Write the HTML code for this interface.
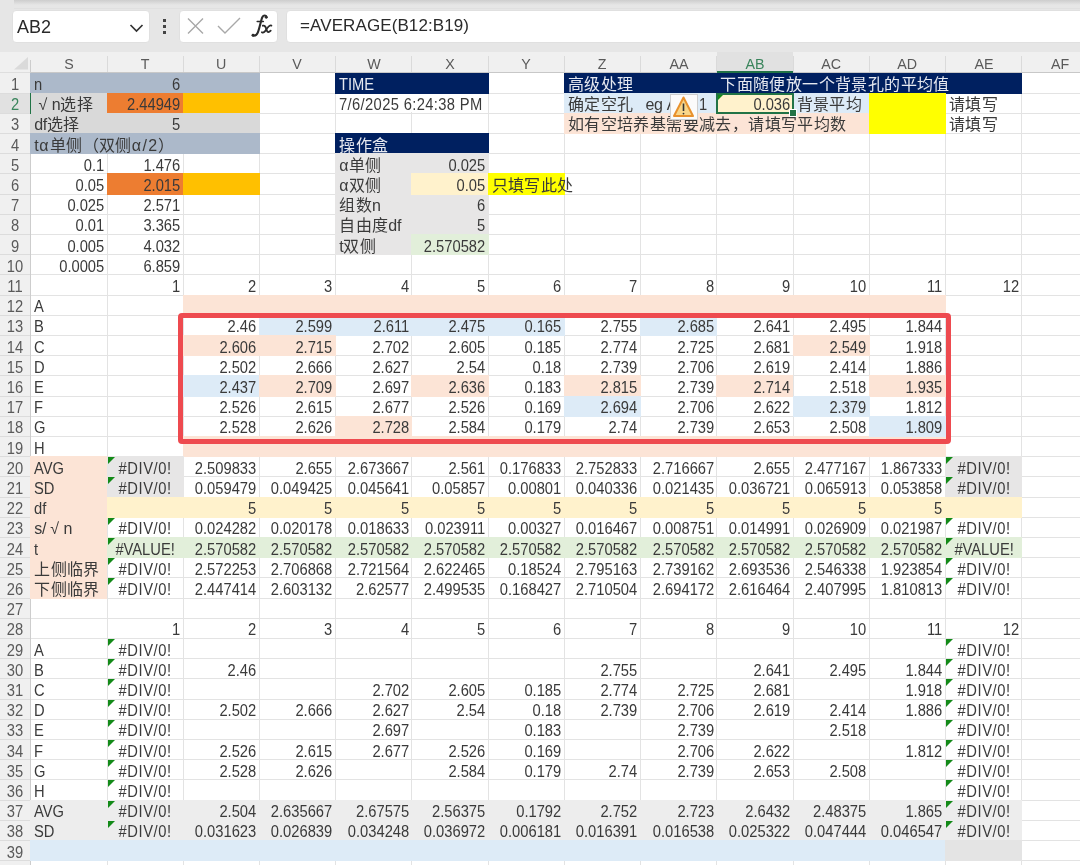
<!DOCTYPE html><html lang="zh-CN"><head><meta charset="utf-8"><style>
*{margin:0;padding:0;box-sizing:border-box}
html,body{width:1080px;height:865px;overflow:hidden;background:#fff;font-family:"Liberation Sans",sans-serif;color:#3a3a3a}
body{filter:blur(0.5px)}
.a{position:absolute}
.f{position:absolute}
.t{position:absolute;white-space:nowrap;height:20px;line-height:20px;font-size:16px}
.n{transform:scaleX(0.92)}
.L{transform-origin:left center}.R{transform-origin:right center}.C{transform-origin:center center}
.cj{font-size:16px;letter-spacing:0.4px;line-height:0}
.lt{letter-spacing:-0.3px;line-height:0}
.gh{position:absolute;height:1px;background:#e3e3e3}
.gv{position:absolute;width:1px;background:#e3e3e3}
.rh{position:absolute;left:0;width:30px;text-align:center;font-size:16px;color:#505050;line-height:20px;height:20px;transform:scaleX(0.92)}
.ch{position:absolute;top:53.5px;text-align:center;font-size:15.5px;color:#505050;line-height:20px;height:20px;transform:scaleX(0.92)}
</style></head><body>

<div class="a" style="left:0;top:0;width:1080px;height:52px;background:#e6e6e6"></div>
<div class="a" style="left:14px;top:0;width:1066px;height:5px;background:linear-gradient(#cdcdcd,#e6e6e6)"></div>
<div class="a" style="left:14px;top:8px;width:1066px;height:1px;background:#e0e0e0"></div>
<div class="a" style="left:12px;top:9.5px;width:138px;height:33px;background:#fff;border-radius:4px;border:1px solid #e0e0e0"></div>
<div class="a" style="left:17px;top:14px;font-size:18px;line-height:26px;color:#2a2a2a">AB2</div>
<svg class="a" style="left:128px;top:21px" width="18" height="14"><path d="M2.5 4 L8.5 10 L14.5 4" fill="none" stroke="#333" stroke-width="1.7"/></svg>
<div class="a" style="left:163px;top:18.5px;width:3px;height:3px;background:#444"></div>
<div class="a" style="left:163px;top:24.5px;width:3px;height:3px;background:#444"></div>
<div class="a" style="left:163px;top:30.5px;width:3px;height:3px;background:#444"></div>
<div class="a" style="left:179px;top:9.5px;width:99px;height:33px;background:#fff;border-radius:4px;border:1px solid #e0e0e0"></div>
<svg class="a" style="left:185px;top:16px" width="22" height="22"><path d="M3 2.5 L18 17.5 M18 2.5 L3 17.5" stroke="#a8a8a8" stroke-width="1.4" fill="none"/></svg>
<svg class="a" style="left:215px;top:16px" width="28" height="22"><path d="M3 10 L10 17 L25 2" stroke="#a8a8a8" stroke-width="1.4" fill="none"/></svg>
<svg class="a" style="left:0;top:0" width="300" height="45"><g fill="none" stroke="#2b2b2b" stroke-linecap="round"><path d="M266.6 17.2 C266.4 15.2 263.6 14.8 262.3 17.3 C261.3 19.3 259.2 29.5 257.9 32.3 C256.9 34.6 255 36.2 252.8 35.4" stroke-width="2.1"/><path d="M257.2 21.6 L263.4 21.6" stroke-width="1.5"/><path d="M262.8 25.7 C264.8 25 265.7 27 266.4 29.4 C267.1 31.9 268.3 33.2 270.7 30.6" stroke-width="1.8"/><path d="M271.4 25.6 C269.9 24.9 268.5 26.4 266.6 29 C264.8 31.6 263.6 33.4 261.9 32.2" stroke-width="1.8"/></g><circle cx="266.2" cy="17.3" r="1.4" fill="#2b2b2b"/><circle cx="253" cy="35.2" r="1.4" fill="#2b2b2b"/></svg>
<div class="a" style="left:286px;top:9.5px;width:800px;height:33px;background:#fff;border-radius:4px;border:1px solid #e0e0e0"></div>
<div class="a" style="left:300px;top:13px;font-size:17px;letter-spacing:0.1px;line-height:26px;color:#2a2a2a">=AVERAGE(B12:B19)</div>
<div class="a" style="left:0;top:52px;width:1080px;height:21px;background:#f0f0f0"></div>
<div class="a" style="left:30px;top:72px;width:1050px;height:1px;background:#c8c8c8"></div>
<div class="a" style="left:0;top:72px;width:30px;height:1px;background:#dedede"></div>
<div class="a" style="left:0;top:73px;width:30px;height:800px;background:#f0f0f0"></div>
<div class="a" style="left:30px;top:60px;width:1px;height:812px;background:#cdcdcd"></div>
<svg class="a" style="left:10px;top:55px" width="20" height="17"><path d="M18 2 L18 14.6 L4 14.6 Z" fill="#dadada"/></svg>
<div class="a" style="left:716.8px;top:52px;width:76.2px;height:20px;background:#e1e1e1"></div>
<div class="a" style="left:716.8px;top:70.5px;width:76.2px;height:2px;background:#217346"></div>
<div class="ch" style="left:30.7px;width:76.2px;color:#5a5a5a">S</div>
<div class="ch" style="left:107.0px;width:76.2px;color:#5a5a5a">T</div>
<div class="a" style="left:106.5px;top:56px;width:1px;height:16px;background:#dadada"></div>
<div class="ch" style="left:183.2px;width:76.2px;color:#5a5a5a">U</div>
<div class="a" style="left:182.7px;top:56px;width:1px;height:16px;background:#dadada"></div>
<div class="ch" style="left:259.4px;width:76.2px;color:#5a5a5a">V</div>
<div class="a" style="left:258.9px;top:56px;width:1px;height:16px;background:#dadada"></div>
<div class="ch" style="left:335.7px;width:76.2px;color:#5a5a5a">W</div>
<div class="a" style="left:335.2px;top:56px;width:1px;height:16px;background:#dadada"></div>
<div class="ch" style="left:411.9px;width:76.2px;color:#5a5a5a">X</div>
<div class="a" style="left:411.4px;top:56px;width:1px;height:16px;background:#dadada"></div>
<div class="ch" style="left:488.1px;width:76.2px;color:#5a5a5a">Y</div>
<div class="a" style="left:487.6px;top:56px;width:1px;height:16px;background:#dadada"></div>
<div class="ch" style="left:564.4px;width:76.2px;color:#5a5a5a">Z</div>
<div class="a" style="left:563.9px;top:56px;width:1px;height:16px;background:#dadada"></div>
<div class="ch" style="left:640.6px;width:76.2px;color:#5a5a5a">AA</div>
<div class="a" style="left:640.1px;top:56px;width:1px;height:16px;background:#dadada"></div>
<div class="ch" style="left:716.8px;width:76.2px;color:#3a855c">AB</div>
<div class="a" style="left:716.3px;top:56px;width:1px;height:16px;background:#dadada"></div>
<div class="ch" style="left:793.0px;width:76.2px;color:#5a5a5a">AC</div>
<div class="a" style="left:792.5px;top:56px;width:1px;height:16px;background:#dadada"></div>
<div class="ch" style="left:869.3px;width:76.2px;color:#5a5a5a">AD</div>
<div class="a" style="left:868.8px;top:56px;width:1px;height:16px;background:#dadada"></div>
<div class="ch" style="left:945.5px;width:76.2px;color:#5a5a5a">AE</div>
<div class="a" style="left:945.0px;top:56px;width:1px;height:16px;background:#dadada"></div>
<div class="ch" style="left:1021.7px;width:76.2px;color:#5a5a5a">AF</div>
<div class="a" style="left:1021.2px;top:56px;width:1px;height:16px;background:#dadada"></div>
<div class="a" style="left:0;top:93.1px;width:30px;height:20.2px;background:#e1e1e1"></div>
<div class="rh" style="top:75.06px;color:#5a5a5a">1</div>
<div class="a" style="left:0;top:92.6px;width:30px;height:1px;background:#dcdcdc"></div>
<div class="rh" style="top:95.26px;color:#3a855c">2</div>
<div class="a" style="left:0;top:112.8px;width:30px;height:1px;background:#dcdcdc"></div>
<div class="rh" style="top:115.46px;color:#5a5a5a">3</div>
<div class="a" style="left:0;top:133.0px;width:30px;height:1px;background:#dcdcdc"></div>
<div class="rh" style="top:135.66px;color:#5a5a5a">4</div>
<div class="a" style="left:0;top:153.2px;width:30px;height:1px;background:#dcdcdc"></div>
<div class="rh" style="top:155.86px;color:#5a5a5a">5</div>
<div class="a" style="left:0;top:173.4px;width:30px;height:1px;background:#dcdcdc"></div>
<div class="rh" style="top:176.06px;color:#5a5a5a">6</div>
<div class="a" style="left:0;top:193.6px;width:30px;height:1px;background:#dcdcdc"></div>
<div class="rh" style="top:196.26px;color:#5a5a5a">7</div>
<div class="a" style="left:0;top:213.8px;width:30px;height:1px;background:#dcdcdc"></div>
<div class="rh" style="top:216.46px;color:#5a5a5a">8</div>
<div class="a" style="left:0;top:234.0px;width:30px;height:1px;background:#dcdcdc"></div>
<div class="rh" style="top:236.66px;color:#5a5a5a">9</div>
<div class="a" style="left:0;top:254.2px;width:30px;height:1px;background:#dcdcdc"></div>
<div class="rh" style="top:256.86px;color:#5a5a5a">10</div>
<div class="a" style="left:0;top:274.4px;width:30px;height:1px;background:#dcdcdc"></div>
<div class="rh" style="top:277.06px;color:#5a5a5a">11</div>
<div class="a" style="left:0;top:294.6px;width:30px;height:1px;background:#dcdcdc"></div>
<div class="rh" style="top:297.26px;color:#5a5a5a">12</div>
<div class="a" style="left:0;top:314.8px;width:30px;height:1px;background:#dcdcdc"></div>
<div class="rh" style="top:317.46px;color:#5a5a5a">13</div>
<div class="a" style="left:0;top:335.0px;width:30px;height:1px;background:#dcdcdc"></div>
<div class="rh" style="top:337.66px;color:#5a5a5a">14</div>
<div class="a" style="left:0;top:355.2px;width:30px;height:1px;background:#dcdcdc"></div>
<div class="rh" style="top:357.86px;color:#5a5a5a">15</div>
<div class="a" style="left:0;top:375.4px;width:30px;height:1px;background:#dcdcdc"></div>
<div class="rh" style="top:378.06px;color:#5a5a5a">16</div>
<div class="a" style="left:0;top:395.6px;width:30px;height:1px;background:#dcdcdc"></div>
<div class="rh" style="top:398.26px;color:#5a5a5a">17</div>
<div class="a" style="left:0;top:415.8px;width:30px;height:1px;background:#dcdcdc"></div>
<div class="rh" style="top:418.46px;color:#5a5a5a">18</div>
<div class="a" style="left:0;top:436.0px;width:30px;height:1px;background:#dcdcdc"></div>
<div class="rh" style="top:438.66px;color:#5a5a5a">19</div>
<div class="a" style="left:0;top:456.2px;width:30px;height:1px;background:#dcdcdc"></div>
<div class="rh" style="top:458.86px;color:#5a5a5a">20</div>
<div class="a" style="left:0;top:476.4px;width:30px;height:1px;background:#dcdcdc"></div>
<div class="rh" style="top:479.06px;color:#5a5a5a">21</div>
<div class="a" style="left:0;top:496.6px;width:30px;height:1px;background:#dcdcdc"></div>
<div class="rh" style="top:499.26px;color:#5a5a5a">22</div>
<div class="a" style="left:0;top:516.8px;width:30px;height:1px;background:#dcdcdc"></div>
<div class="rh" style="top:519.46px;color:#5a5a5a">23</div>
<div class="a" style="left:0;top:537.0px;width:30px;height:1px;background:#dcdcdc"></div>
<div class="rh" style="top:539.66px;color:#5a5a5a">24</div>
<div class="a" style="left:0;top:557.2px;width:30px;height:1px;background:#dcdcdc"></div>
<div class="rh" style="top:559.86px;color:#5a5a5a">25</div>
<div class="a" style="left:0;top:577.4px;width:30px;height:1px;background:#dcdcdc"></div>
<div class="rh" style="top:580.06px;color:#5a5a5a">26</div>
<div class="a" style="left:0;top:597.6px;width:30px;height:1px;background:#dcdcdc"></div>
<div class="rh" style="top:600.26px;color:#5a5a5a">27</div>
<div class="a" style="left:0;top:617.8px;width:30px;height:1px;background:#dcdcdc"></div>
<div class="rh" style="top:620.46px;color:#5a5a5a">28</div>
<div class="a" style="left:0;top:638.0px;width:30px;height:1px;background:#dcdcdc"></div>
<div class="rh" style="top:640.66px;color:#5a5a5a">29</div>
<div class="a" style="left:0;top:658.2px;width:30px;height:1px;background:#dcdcdc"></div>
<div class="rh" style="top:660.86px;color:#5a5a5a">30</div>
<div class="a" style="left:0;top:678.4px;width:30px;height:1px;background:#dcdcdc"></div>
<div class="rh" style="top:681.06px;color:#5a5a5a">31</div>
<div class="a" style="left:0;top:698.6px;width:30px;height:1px;background:#dcdcdc"></div>
<div class="rh" style="top:701.26px;color:#5a5a5a">32</div>
<div class="a" style="left:0;top:718.8px;width:30px;height:1px;background:#dcdcdc"></div>
<div class="rh" style="top:721.46px;color:#5a5a5a">33</div>
<div class="a" style="left:0;top:739.0px;width:30px;height:1px;background:#dcdcdc"></div>
<div class="rh" style="top:741.66px;color:#5a5a5a">34</div>
<div class="a" style="left:0;top:759.2px;width:30px;height:1px;background:#dcdcdc"></div>
<div class="rh" style="top:761.86px;color:#5a5a5a">35</div>
<div class="a" style="left:0;top:779.4px;width:30px;height:1px;background:#dcdcdc"></div>
<div class="rh" style="top:782.06px;color:#5a5a5a">36</div>
<div class="a" style="left:0;top:799.6px;width:30px;height:1px;background:#dcdcdc"></div>
<div class="rh" style="top:802.26px;color:#5a5a5a">37</div>
<div class="a" style="left:0;top:819.8px;width:30px;height:1px;background:#dcdcdc"></div>
<div class="rh" style="top:822.46px;color:#5a5a5a">38</div>
<div class="a" style="left:0;top:840.0px;width:30px;height:1px;background:#dcdcdc"></div>
<div class="rh" style="top:842.66px;color:#5a5a5a">39</div>
<div class="a" style="left:0;top:860.2px;width:30px;height:1px;background:#dcdcdc"></div>
<div class="rh" style="top:862.86px;color:#5a5a5a">40</div>
<div class="a" style="left:0;top:880.4px;width:30px;height:1px;background:#dcdcdc"></div>
<div class="gh" style="left:31px;top:92.6px;width:1049px"></div>
<div class="gh" style="left:31px;top:112.8px;width:1049px"></div>
<div class="gh" style="left:31px;top:133.0px;width:1049px"></div>
<div class="gh" style="left:31px;top:153.2px;width:1049px"></div>
<div class="gh" style="left:31px;top:173.4px;width:1049px"></div>
<div class="gh" style="left:31px;top:193.6px;width:1049px"></div>
<div class="gh" style="left:31px;top:213.8px;width:1049px"></div>
<div class="gh" style="left:31px;top:234.0px;width:1049px"></div>
<div class="gh" style="left:31px;top:254.2px;width:1049px"></div>
<div class="gh" style="left:31px;top:274.4px;width:1049px"></div>
<div class="gh" style="left:31px;top:294.6px;width:1049px"></div>
<div class="gh" style="left:31px;top:314.8px;width:1049px"></div>
<div class="gh" style="left:31px;top:335.0px;width:1049px"></div>
<div class="gh" style="left:31px;top:355.2px;width:1049px"></div>
<div class="gh" style="left:31px;top:375.4px;width:1049px"></div>
<div class="gh" style="left:31px;top:395.6px;width:1049px"></div>
<div class="gh" style="left:31px;top:415.8px;width:1049px"></div>
<div class="gh" style="left:31px;top:436.0px;width:1049px"></div>
<div class="gh" style="left:31px;top:456.2px;width:1049px"></div>
<div class="gh" style="left:31px;top:476.4px;width:1049px"></div>
<div class="gh" style="left:31px;top:496.6px;width:1049px"></div>
<div class="gh" style="left:31px;top:516.8px;width:1049px"></div>
<div class="gh" style="left:31px;top:537.0px;width:1049px"></div>
<div class="gh" style="left:31px;top:557.2px;width:1049px"></div>
<div class="gh" style="left:31px;top:577.4px;width:1049px"></div>
<div class="gh" style="left:31px;top:597.6px;width:1049px"></div>
<div class="gh" style="left:31px;top:617.8px;width:1049px"></div>
<div class="gh" style="left:31px;top:638.0px;width:1049px"></div>
<div class="gh" style="left:31px;top:658.2px;width:1049px"></div>
<div class="gh" style="left:31px;top:678.4px;width:1049px"></div>
<div class="gh" style="left:31px;top:698.6px;width:1049px"></div>
<div class="gh" style="left:31px;top:718.8px;width:1049px"></div>
<div class="gh" style="left:31px;top:739.0px;width:1049px"></div>
<div class="gh" style="left:31px;top:759.2px;width:1049px"></div>
<div class="gh" style="left:31px;top:779.4px;width:1049px"></div>
<div class="gh" style="left:31px;top:799.6px;width:1049px"></div>
<div class="gh" style="left:31px;top:819.8px;width:1049px"></div>
<div class="gh" style="left:31px;top:840.0px;width:1049px"></div>
<div class="gh" style="left:31px;top:860.2px;width:1049px"></div>
<div class="gh" style="left:31px;top:880.4px;width:1049px"></div>
<div class="gv" style="left:106.5px;top:73px;height:800px"></div>
<div class="gv" style="left:182.7px;top:73px;height:800px"></div>
<div class="gv" style="left:258.9px;top:73px;height:800px"></div>
<div class="gv" style="left:335.2px;top:73px;height:800px"></div>
<div class="gv" style="left:411.4px;top:73px;height:800px"></div>
<div class="gv" style="left:487.6px;top:73px;height:800px"></div>
<div class="gv" style="left:563.9px;top:73px;height:800px"></div>
<div class="gv" style="left:640.1px;top:73px;height:800px"></div>
<div class="gv" style="left:716.3px;top:73px;height:800px"></div>
<div class="gv" style="left:792.5px;top:73px;height:800px"></div>
<div class="gv" style="left:868.8px;top:73px;height:800px"></div>
<div class="gv" style="left:945.0px;top:73px;height:800px"></div>
<div class="gv" style="left:1021.2px;top:73px;height:800px"></div>
<div class="gv" style="left:1097.5px;top:73px;height:800px"></div>
<div class="a" style="left:410.9px;top:94.1px;width:3px;height:18.2px;background:#fff"></div>
<div class="a" style="left:563.4px;top:174.9px;width:3px;height:18.2px;background:#fff"></div>
<div class="f" style="left:30.2px;top:73.0px;width:229.7px;height:20.6px;background:#acb9ca"></div>
<div class="f" style="left:335.2px;top:73.0px;width:153.5px;height:20.6px;background:#002060"></div>
<div class="f" style="left:563.9px;top:73.0px;width:458.4px;height:20.6px;background:#002060"></div>
<div class="f" style="left:30.2px;top:92.6px;width:77.2px;height:21.2px;background:#d9d9d9"></div>
<div class="f" style="left:106.5px;top:92.6px;width:77.2px;height:21.2px;background:#ed7d31"></div>
<div class="f" style="left:182.7px;top:92.6px;width:77.2px;height:21.2px;background:#ffc000"></div>
<div class="f" style="left:563.9px;top:92.6px;width:153.5px;height:21.2px;background:#ddebf7"></div>
<div class="f" style="left:716.3px;top:92.6px;width:77.2px;height:21.2px;background:#fff2cc"></div>
<div class="f" style="left:792.5px;top:92.6px;width:77.2px;height:21.2px;background:#ddebf7"></div>
<div class="f" style="left:868.8px;top:92.6px;width:77.2px;height:21.2px;background:#ffff00"></div>
<div class="f" style="left:30.2px;top:112.8px;width:229.7px;height:21.2px;background:#d9d9d9"></div>
<div class="f" style="left:563.9px;top:112.8px;width:305.9px;height:21.2px;background:#fce4d6"></div>
<div class="f" style="left:868.8px;top:112.8px;width:77.2px;height:21.2px;background:#ffff00"></div>
<div class="f" style="left:30.2px;top:133.0px;width:229.7px;height:21.2px;background:#acb9ca"></div>
<div class="f" style="left:335.2px;top:133.0px;width:153.5px;height:21.2px;background:#002060"></div>
<div class="f" style="left:335.2px;top:153.2px;width:153.5px;height:21.2px;background:#e7e6e6"></div>
<div class="f" style="left:335.2px;top:193.6px;width:153.5px;height:21.2px;background:#e7e6e6"></div>
<div class="f" style="left:335.2px;top:213.8px;width:153.5px;height:21.2px;background:#e7e6e6"></div>
<div class="f" style="left:106.5px;top:173.4px;width:77.2px;height:21.2px;background:#ed7d31"></div>
<div class="f" style="left:182.7px;top:173.4px;width:77.2px;height:21.2px;background:#ffc000"></div>
<div class="f" style="left:335.2px;top:173.4px;width:77.2px;height:21.2px;background:#e7e6e6"></div>
<div class="f" style="left:411.4px;top:173.4px;width:77.2px;height:21.2px;background:#fff2cc"></div>
<div class="f" style="left:487.6px;top:173.4px;width:77.2px;height:21.2px;background:#ffff00"></div>
<div class="f" style="left:335.2px;top:234.0px;width:77.2px;height:21.2px;background:#e7e6e6"></div>
<div class="f" style="left:411.4px;top:234.0px;width:77.2px;height:21.2px;background:#e2efda"></div>
<div class="f" style="left:182.7px;top:294.6px;width:763.3px;height:21.2px;background:#fce4d6"></div>
<div class="f" style="left:182.7px;top:436.0px;width:763.3px;height:21.2px;background:#fce4d6"></div>
<div class="f" style="left:258.9px;top:314.8px;width:77.2px;height:21.2px;background:#ddebf7"></div>
<div class="f" style="left:335.2px;top:314.8px;width:77.2px;height:21.2px;background:#ddebf7"></div>
<div class="f" style="left:411.4px;top:314.8px;width:77.2px;height:21.2px;background:#ddebf7"></div>
<div class="f" style="left:487.6px;top:314.8px;width:77.2px;height:21.2px;background:#ddebf7"></div>
<div class="f" style="left:640.1px;top:314.8px;width:77.2px;height:21.2px;background:#ddebf7"></div>
<div class="f" style="left:182.7px;top:335.0px;width:77.2px;height:21.2px;background:#fce4d6"></div>
<div class="f" style="left:258.9px;top:335.0px;width:77.2px;height:21.2px;background:#fce4d6"></div>
<div class="f" style="left:792.5px;top:335.0px;width:77.2px;height:21.2px;background:#fce4d6"></div>
<div class="f" style="left:182.7px;top:375.4px;width:77.2px;height:21.2px;background:#ddebf7"></div>
<div class="f" style="left:258.9px;top:375.4px;width:77.2px;height:21.2px;background:#fce4d6"></div>
<div class="f" style="left:411.4px;top:375.4px;width:77.2px;height:21.2px;background:#fce4d6"></div>
<div class="f" style="left:563.9px;top:375.4px;width:77.2px;height:21.2px;background:#fce4d6"></div>
<div class="f" style="left:716.3px;top:375.4px;width:77.2px;height:21.2px;background:#fce4d6"></div>
<div class="f" style="left:868.8px;top:375.4px;width:77.2px;height:21.2px;background:#fce4d6"></div>
<div class="f" style="left:563.9px;top:395.6px;width:77.2px;height:21.2px;background:#ddebf7"></div>
<div class="f" style="left:792.5px;top:395.6px;width:77.2px;height:21.2px;background:#ddebf7"></div>
<div class="f" style="left:335.2px;top:415.8px;width:77.2px;height:21.2px;background:#fce4d6"></div>
<div class="f" style="left:868.8px;top:415.8px;width:77.2px;height:21.2px;background:#ddebf7"></div>
<div class="f" style="left:30.2px;top:456.2px;width:77.2px;height:21.2px;background:#fce4d6"></div>
<div class="f" style="left:30.2px;top:476.4px;width:77.2px;height:21.2px;background:#fce4d6"></div>
<div class="f" style="left:30.2px;top:496.6px;width:77.2px;height:21.2px;background:#fce4d6"></div>
<div class="f" style="left:30.2px;top:516.8px;width:77.2px;height:21.2px;background:#fce4d6"></div>
<div class="f" style="left:30.2px;top:537.0px;width:77.2px;height:21.2px;background:#fce4d6"></div>
<div class="f" style="left:30.2px;top:557.2px;width:77.2px;height:21.2px;background:#fce4d6"></div>
<div class="f" style="left:30.2px;top:577.4px;width:77.2px;height:21.2px;background:#fce4d6"></div>
<div class="f" style="left:106.5px;top:456.2px;width:77.2px;height:21.2px;background:#e7e6e6"></div>
<div class="f" style="left:106.5px;top:476.4px;width:77.2px;height:21.2px;background:#e7e6e6"></div>
<div class="f" style="left:945.0px;top:456.2px;width:77.2px;height:21.2px;background:#e7e6e6"></div>
<div class="f" style="left:945.0px;top:476.4px;width:77.2px;height:21.2px;background:#e7e6e6"></div>
<div class="f" style="left:106.5px;top:496.6px;width:915.8px;height:21.2px;background:#fff2cc"></div>
<div class="f" style="left:106.5px;top:537.0px;width:915.8px;height:21.2px;background:#e2efda"></div>
<div class="f" style="left:30.2px;top:799.6px;width:992.0px;height:21.2px;background:#ededed"></div>
<div class="f" style="left:30.2px;top:819.8px;width:992.0px;height:21.2px;background:#ededed"></div>
<div class="f" style="left:30.2px;top:840.0px;width:915.8px;height:21.2px;background:#ddebf7"></div>
<div class="f" style="left:945.0px;top:840.0px;width:77.2px;height:21.2px;background:#e4e4e4"></div>
<svg class="a" style="left:107.5px;top:457.2px" width="9" height="9"><path d="M0 0 L7 0 L0 7Z" fill="#138a18"/></svg>
<svg class="a" style="left:946.0px;top:457.2px" width="9" height="9"><path d="M0 0 L7 0 L0 7Z" fill="#138a18"/></svg>
<svg class="a" style="left:107.5px;top:477.4px" width="9" height="9"><path d="M0 0 L7 0 L0 7Z" fill="#138a18"/></svg>
<svg class="a" style="left:946.0px;top:477.4px" width="9" height="9"><path d="M0 0 L7 0 L0 7Z" fill="#138a18"/></svg>
<svg class="a" style="left:107.5px;top:517.8px" width="9" height="9"><path d="M0 0 L7 0 L0 7Z" fill="#138a18"/></svg>
<svg class="a" style="left:946.0px;top:517.8px" width="9" height="9"><path d="M0 0 L7 0 L0 7Z" fill="#138a18"/></svg>
<svg class="a" style="left:107.5px;top:538.0px" width="9" height="9"><path d="M0 0 L7 0 L0 7Z" fill="#138a18"/></svg>
<svg class="a" style="left:946.0px;top:538.0px" width="9" height="9"><path d="M0 0 L7 0 L0 7Z" fill="#138a18"/></svg>
<svg class="a" style="left:107.5px;top:558.2px" width="9" height="9"><path d="M0 0 L7 0 L0 7Z" fill="#138a18"/></svg>
<svg class="a" style="left:946.0px;top:558.2px" width="9" height="9"><path d="M0 0 L7 0 L0 7Z" fill="#138a18"/></svg>
<svg class="a" style="left:107.5px;top:578.4px" width="9" height="9"><path d="M0 0 L7 0 L0 7Z" fill="#138a18"/></svg>
<svg class="a" style="left:946.0px;top:578.4px" width="9" height="9"><path d="M0 0 L7 0 L0 7Z" fill="#138a18"/></svg>
<svg class="a" style="left:107.5px;top:639.0px" width="9" height="9"><path d="M0 0 L7 0 L0 7Z" fill="#138a18"/></svg>
<svg class="a" style="left:946.0px;top:639.0px" width="9" height="9"><path d="M0 0 L7 0 L0 7Z" fill="#138a18"/></svg>
<svg class="a" style="left:107.5px;top:659.2px" width="9" height="9"><path d="M0 0 L7 0 L0 7Z" fill="#138a18"/></svg>
<svg class="a" style="left:946.0px;top:659.2px" width="9" height="9"><path d="M0 0 L7 0 L0 7Z" fill="#138a18"/></svg>
<svg class="a" style="left:107.5px;top:679.4px" width="9" height="9"><path d="M0 0 L7 0 L0 7Z" fill="#138a18"/></svg>
<svg class="a" style="left:946.0px;top:679.4px" width="9" height="9"><path d="M0 0 L7 0 L0 7Z" fill="#138a18"/></svg>
<svg class="a" style="left:107.5px;top:699.6px" width="9" height="9"><path d="M0 0 L7 0 L0 7Z" fill="#138a18"/></svg>
<svg class="a" style="left:946.0px;top:699.6px" width="9" height="9"><path d="M0 0 L7 0 L0 7Z" fill="#138a18"/></svg>
<svg class="a" style="left:107.5px;top:719.8px" width="9" height="9"><path d="M0 0 L7 0 L0 7Z" fill="#138a18"/></svg>
<svg class="a" style="left:946.0px;top:719.8px" width="9" height="9"><path d="M0 0 L7 0 L0 7Z" fill="#138a18"/></svg>
<svg class="a" style="left:107.5px;top:740.0px" width="9" height="9"><path d="M0 0 L7 0 L0 7Z" fill="#138a18"/></svg>
<svg class="a" style="left:946.0px;top:740.0px" width="9" height="9"><path d="M0 0 L7 0 L0 7Z" fill="#138a18"/></svg>
<svg class="a" style="left:107.5px;top:760.2px" width="9" height="9"><path d="M0 0 L7 0 L0 7Z" fill="#138a18"/></svg>
<svg class="a" style="left:946.0px;top:760.2px" width="9" height="9"><path d="M0 0 L7 0 L0 7Z" fill="#138a18"/></svg>
<svg class="a" style="left:107.5px;top:780.4px" width="9" height="9"><path d="M0 0 L7 0 L0 7Z" fill="#138a18"/></svg>
<svg class="a" style="left:946.0px;top:780.4px" width="9" height="9"><path d="M0 0 L7 0 L0 7Z" fill="#138a18"/></svg>
<svg class="a" style="left:107.5px;top:800.6px" width="9" height="9"><path d="M0 0 L7 0 L0 7Z" fill="#138a18"/></svg>
<svg class="a" style="left:946.0px;top:800.6px" width="9" height="9"><path d="M0 0 L7 0 L0 7Z" fill="#138a18"/></svg>
<svg class="a" style="left:107.5px;top:820.8px" width="9" height="9"><path d="M0 0 L7 0 L0 7Z" fill="#138a18"/></svg>
<svg class="a" style="left:946.0px;top:820.8px" width="9" height="9"><path d="M0 0 L7 0 L0 7Z" fill="#138a18"/></svg>
<svg class="a" style="left:717.3px;top:93.6px" width="9" height="9"><path d="M0 0 L7 0 L0 7Z" fill="#138a18"/></svg>
<div class="t n L" style="top:75.06px;left:34.24px;">n</div>
<div class="t n R" style="top:75.06px;left:106.97px;width:73.23px;text-align:right;">6</div>
<div class="t n L" style="top:75.06px;left:339.16px;color:#e6e9f0;">TIME</div>
<div class="t" style="top:75.06px;left:567.85px;color:#e6e9f0;"><span class="cj">高级处理</span></div>
<div class="t" style="top:75.06px;left:720.31px;color:#e6e9f0;"><span class="cj">下面随便放一个背景孔的平均值</span></div>
<div class="t" style="top:95.26px;left:34.24px;"><span class="lt">&nbsp;</span><span class="cj">√</span><span class="lt">&nbsp;n</span><span class="cj">选择</span></div>
<div class="t n R" style="top:95.26px;left:106.97px;width:73.23px;text-align:right;">2.44949</div>
<div class="t n L" style="top:95.26px;left:339.16px;letter-spacing:0.4px">7/6/2025 6:24:38 PM</div>
<div class="t" style="top:95.26px;left:567.85px;"><span class="cj">确定空孔</span><span class="lt" style="margin-left:12px">eg&nbsp;A</span></div>
<div class="t n R" style="top:95.26px;left:716.81px;width:73.23px;text-align:right;">0.036</div>
<div class="t" style="top:95.26px;left:796.54px;"><span class="cj">背景平均</span></div>
<div class="t" style="top:95.26px;left:949.00px;"><span class="cj">请填写</span></div>
<div class="t" style="top:115.46px;left:34.24px;"><span class="lt">df</span><span class="cj">选择</span></div>
<div class="t n R" style="top:115.46px;left:106.97px;width:73.23px;text-align:right;">5</div>
<div class="t" style="top:115.46px;left:567.85px;"><span class="cj">如有空培养基需要减去，请填写平均数</span></div>
<div class="t" style="top:115.46px;left:949.00px;"><span class="cj">请填写</span></div>
<div class="t" style="top:135.66px;left:34.24px;"><span class="lt" style="letter-spacing:0.6px">t</span><span class="cj" style="letter-spacing:1.2px">α</span><span class="cj">单侧（双侧</span><span class="cj" style="letter-spacing:1.5px">α</span><span class="lt" style="letter-spacing:1.2px">/2</span><span class="cj">）</span></div>
<div class="t" style="top:135.66px;left:339.16px;color:#e6e9f0;"><span class="cj">操作盒</span></div>
<div class="t n R" style="top:155.86px;left:30.74px;width:73.23px;text-align:right;">0.1</div>
<div class="t n R" style="top:155.86px;left:106.97px;width:73.23px;text-align:right;">1.476</div>
<div class="t n R" style="top:176.06px;left:30.74px;width:73.23px;text-align:right;">0.05</div>
<div class="t n R" style="top:176.06px;left:106.97px;width:73.23px;text-align:right;">2.015</div>
<div class="t n R" style="top:196.26px;left:30.74px;width:73.23px;text-align:right;">0.025</div>
<div class="t n R" style="top:196.26px;left:106.97px;width:73.23px;text-align:right;">2.571</div>
<div class="t n R" style="top:216.46px;left:30.74px;width:73.23px;text-align:right;">0.01</div>
<div class="t n R" style="top:216.46px;left:106.97px;width:73.23px;text-align:right;">3.365</div>
<div class="t n R" style="top:236.66px;left:30.74px;width:73.23px;text-align:right;">0.005</div>
<div class="t n R" style="top:236.66px;left:106.97px;width:73.23px;text-align:right;">4.032</div>
<div class="t n R" style="top:256.86px;left:30.74px;width:73.23px;text-align:right;">0.0005</div>
<div class="t n R" style="top:256.86px;left:106.97px;width:73.23px;text-align:right;">6.859</div>
<div class="t" style="top:155.86px;left:339.16px;"><span class="cj">α单侧</span></div>
<div class="t n R" style="top:155.86px;left:411.89px;width:73.23px;text-align:right;">0.025</div>
<div class="t" style="top:176.06px;left:339.16px;"><span class="cj">α双侧</span></div>
<div class="t n R" style="top:176.06px;left:411.89px;width:73.23px;text-align:right;">0.05</div>
<div class="t" style="top:196.26px;left:339.16px;"><span class="cj">组数</span><span class="lt">n</span></div>
<div class="t n R" style="top:196.26px;left:411.89px;width:73.23px;text-align:right;">6</div>
<div class="t" style="top:216.46px;left:339.16px;"><span class="cj">自由度</span><span class="lt">df</span></div>
<div class="t n R" style="top:216.46px;left:411.89px;width:73.23px;text-align:right;">5</div>
<div class="t" style="top:236.66px;left:339.16px;"><span class="lt">t</span><span class="cj">双侧</span></div>
<div class="t n R" style="top:236.66px;left:411.89px;width:73.23px;text-align:right;">2.570582</div>
<div class="t" style="top:176.06px;left:491.62px;"><span class="cj">只填写此处</span></div>
<div class="t n R" style="top:277.06px;left:106.97px;width:73.23px;text-align:right;">1</div>
<div class="t n R" style="top:620.46px;left:106.97px;width:73.23px;text-align:right;">1</div>
<div class="t n R" style="top:277.06px;left:183.20px;width:73.23px;text-align:right;">2</div>
<div class="t n R" style="top:620.46px;left:183.20px;width:73.23px;text-align:right;">2</div>
<div class="t n R" style="top:277.06px;left:259.43px;width:73.23px;text-align:right;">3</div>
<div class="t n R" style="top:620.46px;left:259.43px;width:73.23px;text-align:right;">3</div>
<div class="t n R" style="top:277.06px;left:335.66px;width:73.23px;text-align:right;">4</div>
<div class="t n R" style="top:620.46px;left:335.66px;width:73.23px;text-align:right;">4</div>
<div class="t n R" style="top:277.06px;left:411.89px;width:73.23px;text-align:right;">5</div>
<div class="t n R" style="top:620.46px;left:411.89px;width:73.23px;text-align:right;">5</div>
<div class="t n R" style="top:277.06px;left:488.12px;width:73.23px;text-align:right;">6</div>
<div class="t n R" style="top:620.46px;left:488.12px;width:73.23px;text-align:right;">6</div>
<div class="t n R" style="top:277.06px;left:564.35px;width:73.23px;text-align:right;">7</div>
<div class="t n R" style="top:620.46px;left:564.35px;width:73.23px;text-align:right;">7</div>
<div class="t n R" style="top:277.06px;left:640.58px;width:73.23px;text-align:right;">8</div>
<div class="t n R" style="top:620.46px;left:640.58px;width:73.23px;text-align:right;">8</div>
<div class="t n R" style="top:277.06px;left:716.81px;width:73.23px;text-align:right;">9</div>
<div class="t n R" style="top:620.46px;left:716.81px;width:73.23px;text-align:right;">9</div>
<div class="t n R" style="top:277.06px;left:793.04px;width:73.23px;text-align:right;">10</div>
<div class="t n R" style="top:620.46px;left:793.04px;width:73.23px;text-align:right;">10</div>
<div class="t n R" style="top:277.06px;left:869.27px;width:73.23px;text-align:right;">11</div>
<div class="t n R" style="top:620.46px;left:869.27px;width:73.23px;text-align:right;">11</div>
<div class="t n R" style="top:277.06px;left:945.50px;width:73.23px;text-align:right;">12</div>
<div class="t n R" style="top:620.46px;left:945.50px;width:73.23px;text-align:right;">12</div>
<div class="t n L" style="top:297.26px;left:34.24px;">A</div>
<div class="t n L" style="top:640.66px;left:34.24px;">A</div>
<div class="t n L" style="top:317.46px;left:34.24px;">B</div>
<div class="t n L" style="top:660.86px;left:34.24px;">B</div>
<div class="t n L" style="top:337.66px;left:34.24px;">C</div>
<div class="t n L" style="top:681.06px;left:34.24px;">C</div>
<div class="t n L" style="top:357.86px;left:34.24px;">D</div>
<div class="t n L" style="top:701.26px;left:34.24px;">D</div>
<div class="t n L" style="top:378.06px;left:34.24px;">E</div>
<div class="t n L" style="top:721.46px;left:34.24px;">E</div>
<div class="t n L" style="top:398.26px;left:34.24px;">F</div>
<div class="t n L" style="top:741.66px;left:34.24px;">F</div>
<div class="t n L" style="top:418.46px;left:34.24px;">G</div>
<div class="t n L" style="top:761.86px;left:34.24px;">G</div>
<div class="t n L" style="top:438.66px;left:34.24px;">H</div>
<div class="t n L" style="top:782.06px;left:34.24px;">H</div>
<div class="t n R" style="top:317.46px;left:183.20px;width:73.23px;text-align:right;">2.46</div>
<div class="t n R" style="top:317.46px;left:259.43px;width:73.23px;text-align:right;">2.599</div>
<div class="t n R" style="top:317.46px;left:335.66px;width:73.23px;text-align:right;">2.611</div>
<div class="t n R" style="top:317.46px;left:411.89px;width:73.23px;text-align:right;">2.475</div>
<div class="t n R" style="top:317.46px;left:488.12px;width:73.23px;text-align:right;">0.165</div>
<div class="t n R" style="top:317.46px;left:564.35px;width:73.23px;text-align:right;">2.755</div>
<div class="t n R" style="top:317.46px;left:640.58px;width:73.23px;text-align:right;">2.685</div>
<div class="t n R" style="top:317.46px;left:716.81px;width:73.23px;text-align:right;">2.641</div>
<div class="t n R" style="top:317.46px;left:793.04px;width:73.23px;text-align:right;">2.495</div>
<div class="t n R" style="top:317.46px;left:869.27px;width:73.23px;text-align:right;">1.844</div>
<div class="t n R" style="top:337.66px;left:183.20px;width:73.23px;text-align:right;">2.606</div>
<div class="t n R" style="top:337.66px;left:259.43px;width:73.23px;text-align:right;">2.715</div>
<div class="t n R" style="top:337.66px;left:335.66px;width:73.23px;text-align:right;">2.702</div>
<div class="t n R" style="top:337.66px;left:411.89px;width:73.23px;text-align:right;">2.605</div>
<div class="t n R" style="top:337.66px;left:488.12px;width:73.23px;text-align:right;">0.185</div>
<div class="t n R" style="top:337.66px;left:564.35px;width:73.23px;text-align:right;">2.774</div>
<div class="t n R" style="top:337.66px;left:640.58px;width:73.23px;text-align:right;">2.725</div>
<div class="t n R" style="top:337.66px;left:716.81px;width:73.23px;text-align:right;">2.681</div>
<div class="t n R" style="top:337.66px;left:793.04px;width:73.23px;text-align:right;">2.549</div>
<div class="t n R" style="top:337.66px;left:869.27px;width:73.23px;text-align:right;">1.918</div>
<div class="t n R" style="top:357.86px;left:183.20px;width:73.23px;text-align:right;">2.502</div>
<div class="t n R" style="top:357.86px;left:259.43px;width:73.23px;text-align:right;">2.666</div>
<div class="t n R" style="top:357.86px;left:335.66px;width:73.23px;text-align:right;">2.627</div>
<div class="t n R" style="top:357.86px;left:411.89px;width:73.23px;text-align:right;">2.54</div>
<div class="t n R" style="top:357.86px;left:488.12px;width:73.23px;text-align:right;">0.18</div>
<div class="t n R" style="top:357.86px;left:564.35px;width:73.23px;text-align:right;">2.739</div>
<div class="t n R" style="top:357.86px;left:640.58px;width:73.23px;text-align:right;">2.706</div>
<div class="t n R" style="top:357.86px;left:716.81px;width:73.23px;text-align:right;">2.619</div>
<div class="t n R" style="top:357.86px;left:793.04px;width:73.23px;text-align:right;">2.414</div>
<div class="t n R" style="top:357.86px;left:869.27px;width:73.23px;text-align:right;">1.886</div>
<div class="t n R" style="top:378.06px;left:183.20px;width:73.23px;text-align:right;">2.437</div>
<div class="t n R" style="top:378.06px;left:259.43px;width:73.23px;text-align:right;">2.709</div>
<div class="t n R" style="top:378.06px;left:335.66px;width:73.23px;text-align:right;">2.697</div>
<div class="t n R" style="top:378.06px;left:411.89px;width:73.23px;text-align:right;">2.636</div>
<div class="t n R" style="top:378.06px;left:488.12px;width:73.23px;text-align:right;">0.183</div>
<div class="t n R" style="top:378.06px;left:564.35px;width:73.23px;text-align:right;">2.815</div>
<div class="t n R" style="top:378.06px;left:640.58px;width:73.23px;text-align:right;">2.739</div>
<div class="t n R" style="top:378.06px;left:716.81px;width:73.23px;text-align:right;">2.714</div>
<div class="t n R" style="top:378.06px;left:793.04px;width:73.23px;text-align:right;">2.518</div>
<div class="t n R" style="top:378.06px;left:869.27px;width:73.23px;text-align:right;">1.935</div>
<div class="t n R" style="top:398.26px;left:183.20px;width:73.23px;text-align:right;">2.526</div>
<div class="t n R" style="top:398.26px;left:259.43px;width:73.23px;text-align:right;">2.615</div>
<div class="t n R" style="top:398.26px;left:335.66px;width:73.23px;text-align:right;">2.677</div>
<div class="t n R" style="top:398.26px;left:411.89px;width:73.23px;text-align:right;">2.526</div>
<div class="t n R" style="top:398.26px;left:488.12px;width:73.23px;text-align:right;">0.169</div>
<div class="t n R" style="top:398.26px;left:564.35px;width:73.23px;text-align:right;">2.694</div>
<div class="t n R" style="top:398.26px;left:640.58px;width:73.23px;text-align:right;">2.706</div>
<div class="t n R" style="top:398.26px;left:716.81px;width:73.23px;text-align:right;">2.622</div>
<div class="t n R" style="top:398.26px;left:793.04px;width:73.23px;text-align:right;">2.379</div>
<div class="t n R" style="top:398.26px;left:869.27px;width:73.23px;text-align:right;">1.812</div>
<div class="t n R" style="top:418.46px;left:183.20px;width:73.23px;text-align:right;">2.528</div>
<div class="t n R" style="top:418.46px;left:259.43px;width:73.23px;text-align:right;">2.626</div>
<div class="t n R" style="top:418.46px;left:335.66px;width:73.23px;text-align:right;">2.728</div>
<div class="t n R" style="top:418.46px;left:411.89px;width:73.23px;text-align:right;">2.584</div>
<div class="t n R" style="top:418.46px;left:488.12px;width:73.23px;text-align:right;">0.179</div>
<div class="t n R" style="top:418.46px;left:564.35px;width:73.23px;text-align:right;">2.74</div>
<div class="t n R" style="top:418.46px;left:640.58px;width:73.23px;text-align:right;">2.739</div>
<div class="t n R" style="top:418.46px;left:716.81px;width:73.23px;text-align:right;">2.653</div>
<div class="t n R" style="top:418.46px;left:793.04px;width:73.23px;text-align:right;">2.508</div>
<div class="t n R" style="top:418.46px;left:869.27px;width:73.23px;text-align:right;">1.809</div>
<div class="t n R" style="top:458.86px;left:183.20px;width:73.23px;text-align:right;">2.509833</div>
<div class="t n R" style="top:458.86px;left:259.43px;width:73.23px;text-align:right;">2.655</div>
<div class="t n R" style="top:458.86px;left:335.66px;width:73.23px;text-align:right;">2.673667</div>
<div class="t n R" style="top:458.86px;left:411.89px;width:73.23px;text-align:right;">2.561</div>
<div class="t n R" style="top:458.86px;left:488.12px;width:73.23px;text-align:right;">0.176833</div>
<div class="t n R" style="top:458.86px;left:564.35px;width:73.23px;text-align:right;">2.752833</div>
<div class="t n R" style="top:458.86px;left:640.58px;width:73.23px;text-align:right;">2.716667</div>
<div class="t n R" style="top:458.86px;left:716.81px;width:73.23px;text-align:right;">2.655</div>
<div class="t n R" style="top:458.86px;left:793.04px;width:73.23px;text-align:right;">2.477167</div>
<div class="t n R" style="top:458.86px;left:869.27px;width:73.23px;text-align:right;">1.867333</div>
<div class="t n R" style="top:479.06px;left:183.20px;width:73.23px;text-align:right;">0.059479</div>
<div class="t n R" style="top:479.06px;left:259.43px;width:73.23px;text-align:right;">0.049425</div>
<div class="t n R" style="top:479.06px;left:335.66px;width:73.23px;text-align:right;">0.045641</div>
<div class="t n R" style="top:479.06px;left:411.89px;width:73.23px;text-align:right;">0.05857</div>
<div class="t n R" style="top:479.06px;left:488.12px;width:73.23px;text-align:right;">0.00801</div>
<div class="t n R" style="top:479.06px;left:564.35px;width:73.23px;text-align:right;">0.040336</div>
<div class="t n R" style="top:479.06px;left:640.58px;width:73.23px;text-align:right;">0.021435</div>
<div class="t n R" style="top:479.06px;left:716.81px;width:73.23px;text-align:right;">0.036721</div>
<div class="t n R" style="top:479.06px;left:793.04px;width:73.23px;text-align:right;">0.065913</div>
<div class="t n R" style="top:479.06px;left:869.27px;width:73.23px;text-align:right;">0.053858</div>
<div class="t n R" style="top:499.26px;left:183.20px;width:73.23px;text-align:right;">5</div>
<div class="t n R" style="top:499.26px;left:259.43px;width:73.23px;text-align:right;">5</div>
<div class="t n R" style="top:499.26px;left:335.66px;width:73.23px;text-align:right;">5</div>
<div class="t n R" style="top:499.26px;left:411.89px;width:73.23px;text-align:right;">5</div>
<div class="t n R" style="top:499.26px;left:488.12px;width:73.23px;text-align:right;">5</div>
<div class="t n R" style="top:499.26px;left:564.35px;width:73.23px;text-align:right;">5</div>
<div class="t n R" style="top:499.26px;left:640.58px;width:73.23px;text-align:right;">5</div>
<div class="t n R" style="top:499.26px;left:716.81px;width:73.23px;text-align:right;">5</div>
<div class="t n R" style="top:499.26px;left:793.04px;width:73.23px;text-align:right;">5</div>
<div class="t n R" style="top:499.26px;left:869.27px;width:73.23px;text-align:right;">5</div>
<div class="t n R" style="top:519.46px;left:183.20px;width:73.23px;text-align:right;">0.024282</div>
<div class="t n R" style="top:519.46px;left:259.43px;width:73.23px;text-align:right;">0.020178</div>
<div class="t n R" style="top:519.46px;left:335.66px;width:73.23px;text-align:right;">0.018633</div>
<div class="t n R" style="top:519.46px;left:411.89px;width:73.23px;text-align:right;">0.023911</div>
<div class="t n R" style="top:519.46px;left:488.12px;width:73.23px;text-align:right;">0.00327</div>
<div class="t n R" style="top:519.46px;left:564.35px;width:73.23px;text-align:right;">0.016467</div>
<div class="t n R" style="top:519.46px;left:640.58px;width:73.23px;text-align:right;">0.008751</div>
<div class="t n R" style="top:519.46px;left:716.81px;width:73.23px;text-align:right;">0.014991</div>
<div class="t n R" style="top:519.46px;left:793.04px;width:73.23px;text-align:right;">0.026909</div>
<div class="t n R" style="top:519.46px;left:869.27px;width:73.23px;text-align:right;">0.021987</div>
<div class="t n R" style="top:539.66px;left:183.20px;width:73.23px;text-align:right;">2.570582</div>
<div class="t n R" style="top:539.66px;left:259.43px;width:73.23px;text-align:right;">2.570582</div>
<div class="t n R" style="top:539.66px;left:335.66px;width:73.23px;text-align:right;">2.570582</div>
<div class="t n R" style="top:539.66px;left:411.89px;width:73.23px;text-align:right;">2.570582</div>
<div class="t n R" style="top:539.66px;left:488.12px;width:73.23px;text-align:right;">2.570582</div>
<div class="t n R" style="top:539.66px;left:564.35px;width:73.23px;text-align:right;">2.570582</div>
<div class="t n R" style="top:539.66px;left:640.58px;width:73.23px;text-align:right;">2.570582</div>
<div class="t n R" style="top:539.66px;left:716.81px;width:73.23px;text-align:right;">2.570582</div>
<div class="t n R" style="top:539.66px;left:793.04px;width:73.23px;text-align:right;">2.570582</div>
<div class="t n R" style="top:539.66px;left:869.27px;width:73.23px;text-align:right;">2.570582</div>
<div class="t n R" style="top:559.86px;left:183.20px;width:73.23px;text-align:right;">2.572253</div>
<div class="t n R" style="top:559.86px;left:259.43px;width:73.23px;text-align:right;">2.706868</div>
<div class="t n R" style="top:559.86px;left:335.66px;width:73.23px;text-align:right;">2.721564</div>
<div class="t n R" style="top:559.86px;left:411.89px;width:73.23px;text-align:right;">2.622465</div>
<div class="t n R" style="top:559.86px;left:488.12px;width:73.23px;text-align:right;">0.18524</div>
<div class="t n R" style="top:559.86px;left:564.35px;width:73.23px;text-align:right;">2.795163</div>
<div class="t n R" style="top:559.86px;left:640.58px;width:73.23px;text-align:right;">2.739162</div>
<div class="t n R" style="top:559.86px;left:716.81px;width:73.23px;text-align:right;">2.693536</div>
<div class="t n R" style="top:559.86px;left:793.04px;width:73.23px;text-align:right;">2.546338</div>
<div class="t n R" style="top:559.86px;left:869.27px;width:73.23px;text-align:right;">1.923854</div>
<div class="t n R" style="top:580.06px;left:183.20px;width:73.23px;text-align:right;">2.447414</div>
<div class="t n R" style="top:580.06px;left:259.43px;width:73.23px;text-align:right;">2.603132</div>
<div class="t n R" style="top:580.06px;left:335.66px;width:73.23px;text-align:right;">2.62577</div>
<div class="t n R" style="top:580.06px;left:411.89px;width:73.23px;text-align:right;">2.499535</div>
<div class="t n R" style="top:580.06px;left:488.12px;width:73.23px;text-align:right;">0.168427</div>
<div class="t n R" style="top:580.06px;left:564.35px;width:73.23px;text-align:right;">2.710504</div>
<div class="t n R" style="top:580.06px;left:640.58px;width:73.23px;text-align:right;">2.694172</div>
<div class="t n R" style="top:580.06px;left:716.81px;width:73.23px;text-align:right;">2.616464</div>
<div class="t n R" style="top:580.06px;left:793.04px;width:73.23px;text-align:right;">2.407995</div>
<div class="t n R" style="top:580.06px;left:869.27px;width:73.23px;text-align:right;">1.810813</div>
<div class="t n R" style="top:802.26px;left:183.20px;width:73.23px;text-align:right;">2.504</div>
<div class="t n R" style="top:802.26px;left:259.43px;width:73.23px;text-align:right;">2.635667</div>
<div class="t n R" style="top:802.26px;left:335.66px;width:73.23px;text-align:right;">2.67575</div>
<div class="t n R" style="top:802.26px;left:411.89px;width:73.23px;text-align:right;">2.56375</div>
<div class="t n R" style="top:802.26px;left:488.12px;width:73.23px;text-align:right;">0.1792</div>
<div class="t n R" style="top:802.26px;left:564.35px;width:73.23px;text-align:right;">2.752</div>
<div class="t n R" style="top:802.26px;left:640.58px;width:73.23px;text-align:right;">2.723</div>
<div class="t n R" style="top:802.26px;left:716.81px;width:73.23px;text-align:right;">2.6432</div>
<div class="t n R" style="top:802.26px;left:793.04px;width:73.23px;text-align:right;">2.48375</div>
<div class="t n R" style="top:802.26px;left:869.27px;width:73.23px;text-align:right;">1.865</div>
<div class="t n R" style="top:822.46px;left:183.20px;width:73.23px;text-align:right;">0.031623</div>
<div class="t n R" style="top:822.46px;left:259.43px;width:73.23px;text-align:right;">0.026839</div>
<div class="t n R" style="top:822.46px;left:335.66px;width:73.23px;text-align:right;">0.034248</div>
<div class="t n R" style="top:822.46px;left:411.89px;width:73.23px;text-align:right;">0.036972</div>
<div class="t n R" style="top:822.46px;left:488.12px;width:73.23px;text-align:right;">0.006181</div>
<div class="t n R" style="top:822.46px;left:564.35px;width:73.23px;text-align:right;">0.016391</div>
<div class="t n R" style="top:822.46px;left:640.58px;width:73.23px;text-align:right;">0.016538</div>
<div class="t n R" style="top:822.46px;left:716.81px;width:73.23px;text-align:right;">0.025322</div>
<div class="t n R" style="top:822.46px;left:793.04px;width:73.23px;text-align:right;">0.047444</div>
<div class="t n R" style="top:822.46px;left:869.27px;width:73.23px;text-align:right;">0.046547</div>
<div class="t n R" style="top:660.86px;left:183.20px;width:73.23px;text-align:right;">2.46</div>
<div class="t n R" style="top:660.86px;left:564.35px;width:73.23px;text-align:right;">2.755</div>
<div class="t n R" style="top:660.86px;left:716.81px;width:73.23px;text-align:right;">2.641</div>
<div class="t n R" style="top:660.86px;left:793.04px;width:73.23px;text-align:right;">2.495</div>
<div class="t n R" style="top:660.86px;left:869.27px;width:73.23px;text-align:right;">1.844</div>
<div class="t n R" style="top:681.06px;left:335.66px;width:73.23px;text-align:right;">2.702</div>
<div class="t n R" style="top:681.06px;left:411.89px;width:73.23px;text-align:right;">2.605</div>
<div class="t n R" style="top:681.06px;left:488.12px;width:73.23px;text-align:right;">0.185</div>
<div class="t n R" style="top:681.06px;left:564.35px;width:73.23px;text-align:right;">2.774</div>
<div class="t n R" style="top:681.06px;left:640.58px;width:73.23px;text-align:right;">2.725</div>
<div class="t n R" style="top:681.06px;left:716.81px;width:73.23px;text-align:right;">2.681</div>
<div class="t n R" style="top:681.06px;left:869.27px;width:73.23px;text-align:right;">1.918</div>
<div class="t n R" style="top:701.26px;left:183.20px;width:73.23px;text-align:right;">2.502</div>
<div class="t n R" style="top:701.26px;left:259.43px;width:73.23px;text-align:right;">2.666</div>
<div class="t n R" style="top:701.26px;left:335.66px;width:73.23px;text-align:right;">2.627</div>
<div class="t n R" style="top:701.26px;left:411.89px;width:73.23px;text-align:right;">2.54</div>
<div class="t n R" style="top:701.26px;left:488.12px;width:73.23px;text-align:right;">0.18</div>
<div class="t n R" style="top:701.26px;left:564.35px;width:73.23px;text-align:right;">2.739</div>
<div class="t n R" style="top:701.26px;left:640.58px;width:73.23px;text-align:right;">2.706</div>
<div class="t n R" style="top:701.26px;left:716.81px;width:73.23px;text-align:right;">2.619</div>
<div class="t n R" style="top:701.26px;left:793.04px;width:73.23px;text-align:right;">2.414</div>
<div class="t n R" style="top:701.26px;left:869.27px;width:73.23px;text-align:right;">1.886</div>
<div class="t n R" style="top:721.46px;left:335.66px;width:73.23px;text-align:right;">2.697</div>
<div class="t n R" style="top:721.46px;left:488.12px;width:73.23px;text-align:right;">0.183</div>
<div class="t n R" style="top:721.46px;left:640.58px;width:73.23px;text-align:right;">2.739</div>
<div class="t n R" style="top:721.46px;left:793.04px;width:73.23px;text-align:right;">2.518</div>
<div class="t n R" style="top:741.66px;left:183.20px;width:73.23px;text-align:right;">2.526</div>
<div class="t n R" style="top:741.66px;left:259.43px;width:73.23px;text-align:right;">2.615</div>
<div class="t n R" style="top:741.66px;left:335.66px;width:73.23px;text-align:right;">2.677</div>
<div class="t n R" style="top:741.66px;left:411.89px;width:73.23px;text-align:right;">2.526</div>
<div class="t n R" style="top:741.66px;left:488.12px;width:73.23px;text-align:right;">0.169</div>
<div class="t n R" style="top:741.66px;left:640.58px;width:73.23px;text-align:right;">2.706</div>
<div class="t n R" style="top:741.66px;left:716.81px;width:73.23px;text-align:right;">2.622</div>
<div class="t n R" style="top:741.66px;left:869.27px;width:73.23px;text-align:right;">1.812</div>
<div class="t n R" style="top:761.86px;left:183.20px;width:73.23px;text-align:right;">2.528</div>
<div class="t n R" style="top:761.86px;left:259.43px;width:73.23px;text-align:right;">2.626</div>
<div class="t n R" style="top:761.86px;left:411.89px;width:73.23px;text-align:right;">2.584</div>
<div class="t n R" style="top:761.86px;left:488.12px;width:73.23px;text-align:right;">0.179</div>
<div class="t n R" style="top:761.86px;left:564.35px;width:73.23px;text-align:right;">2.74</div>
<div class="t n R" style="top:761.86px;left:640.58px;width:73.23px;text-align:right;">2.739</div>
<div class="t n R" style="top:761.86px;left:716.81px;width:73.23px;text-align:right;">2.653</div>
<div class="t n R" style="top:761.86px;left:793.04px;width:73.23px;text-align:right;">2.508</div>
<div class="t n L" style="top:458.86px;left:34.24px;">AVG</div>
<div class="t n L" style="top:479.06px;left:34.24px;">SD</div>
<div class="t n L" style="top:499.26px;left:34.24px;">df</div>
<div class="t" style="top:519.46px;left:34.24px;"><span class="lt">s/&nbsp;</span><span class="cj">√</span><span class="lt">&nbsp;n</span></div>
<div class="t n L" style="top:539.66px;left:34.24px;">t</div>
<div class="t" style="top:559.86px;left:34.24px;"><span class="cj">上侧临界</span></div>
<div class="t" style="top:580.06px;left:34.24px;"><span class="cj">下侧临界</span></div>
<div class="t n L" style="top:802.26px;left:34.24px;">AVG</div>
<div class="t n L" style="top:822.46px;left:34.24px;">SD</div>
<div class="t n C" style="top:458.86px;left:106.97px;width:76.23px;text-align:center;letter-spacing:0.65px">#DIV/0!</div>
<div class="t n C" style="top:458.86px;left:945.50px;width:76.23px;text-align:center;letter-spacing:0.65px">#DIV/0!</div>
<div class="t n C" style="top:479.06px;left:106.97px;width:76.23px;text-align:center;letter-spacing:0.65px">#DIV/0!</div>
<div class="t n C" style="top:479.06px;left:945.50px;width:76.23px;text-align:center;letter-spacing:0.65px">#DIV/0!</div>
<div class="t n C" style="top:519.46px;left:106.97px;width:76.23px;text-align:center;letter-spacing:0.65px">#DIV/0!</div>
<div class="t n C" style="top:519.46px;left:945.50px;width:76.23px;text-align:center;letter-spacing:0.65px">#DIV/0!</div>
<div class="t n C" style="top:539.66px;left:106.97px;width:76.23px;text-align:center;">#VALUE!</div>
<div class="t n C" style="top:539.66px;left:945.50px;width:76.23px;text-align:center;">#VALUE!</div>
<div class="t n C" style="top:559.86px;left:106.97px;width:76.23px;text-align:center;letter-spacing:0.65px">#DIV/0!</div>
<div class="t n C" style="top:559.86px;left:945.50px;width:76.23px;text-align:center;letter-spacing:0.65px">#DIV/0!</div>
<div class="t n C" style="top:580.06px;left:106.97px;width:76.23px;text-align:center;letter-spacing:0.65px">#DIV/0!</div>
<div class="t n C" style="top:580.06px;left:945.50px;width:76.23px;text-align:center;letter-spacing:0.65px">#DIV/0!</div>
<div class="t n C" style="top:640.66px;left:106.97px;width:76.23px;text-align:center;letter-spacing:0.65px">#DIV/0!</div>
<div class="t n C" style="top:640.66px;left:945.50px;width:76.23px;text-align:center;letter-spacing:0.65px">#DIV/0!</div>
<div class="t n C" style="top:660.86px;left:106.97px;width:76.23px;text-align:center;letter-spacing:0.65px">#DIV/0!</div>
<div class="t n C" style="top:660.86px;left:945.50px;width:76.23px;text-align:center;letter-spacing:0.65px">#DIV/0!</div>
<div class="t n C" style="top:681.06px;left:106.97px;width:76.23px;text-align:center;letter-spacing:0.65px">#DIV/0!</div>
<div class="t n C" style="top:681.06px;left:945.50px;width:76.23px;text-align:center;letter-spacing:0.65px">#DIV/0!</div>
<div class="t n C" style="top:701.26px;left:106.97px;width:76.23px;text-align:center;letter-spacing:0.65px">#DIV/0!</div>
<div class="t n C" style="top:701.26px;left:945.50px;width:76.23px;text-align:center;letter-spacing:0.65px">#DIV/0!</div>
<div class="t n C" style="top:721.46px;left:106.97px;width:76.23px;text-align:center;letter-spacing:0.65px">#DIV/0!</div>
<div class="t n C" style="top:721.46px;left:945.50px;width:76.23px;text-align:center;letter-spacing:0.65px">#DIV/0!</div>
<div class="t n C" style="top:741.66px;left:106.97px;width:76.23px;text-align:center;letter-spacing:0.65px">#DIV/0!</div>
<div class="t n C" style="top:741.66px;left:945.50px;width:76.23px;text-align:center;letter-spacing:0.65px">#DIV/0!</div>
<div class="t n C" style="top:761.86px;left:106.97px;width:76.23px;text-align:center;letter-spacing:0.65px">#DIV/0!</div>
<div class="t n C" style="top:761.86px;left:945.50px;width:76.23px;text-align:center;letter-spacing:0.65px">#DIV/0!</div>
<div class="t n C" style="top:782.06px;left:106.97px;width:76.23px;text-align:center;letter-spacing:0.65px">#DIV/0!</div>
<div class="t n C" style="top:782.06px;left:945.50px;width:76.23px;text-align:center;letter-spacing:0.65px">#DIV/0!</div>
<div class="t n C" style="top:802.26px;left:106.97px;width:76.23px;text-align:center;letter-spacing:0.65px">#DIV/0!</div>
<div class="t n C" style="top:802.26px;left:945.50px;width:76.23px;text-align:center;letter-spacing:0.65px">#DIV/0!</div>
<div class="t n C" style="top:822.46px;left:106.97px;width:76.23px;text-align:center;letter-spacing:0.65px">#DIV/0!</div>
<div class="t n C" style="top:822.46px;left:945.50px;width:76.23px;text-align:center;letter-spacing:0.65px">#DIV/0!</div>
<div class="t n L" style="left:698.5px;top:95.26px">1</div>
<div class="a" style="left:29.8px;top:93.1px;width:1.6px;height:20.6px;background:#217346"></div>
<div class="a" style="left:715.8px;top:92.6px;width:78.2px;height:21.7px;border:2px solid #217346"></div>
<div class="a" style="left:790.0px;top:110.3px;width:6px;height:6px;background:#217346;outline:1px solid #fff"></div>
<div class="a" style="left:670px;top:94px;width:28px;height:26px;background:#fbfbfb;border:1px solid #cfcfcf"></div>
<svg class="a" style="left:670px;top:94px" width="28" height="26"><path d="M13.5 3.5 L23 22 L4 22 Z" fill="#f8d68a" stroke="#e8912d" stroke-width="2" stroke-linejoin="round"/><path d="M13.5 9.5 L13.5 17" stroke="#333" stroke-width="1.6"/><circle cx="13.5" cy="19.6" r="0.9" fill="#333"/></svg>
<div class="a" style="left:177.5px;top:312.5px;width:773px;height:131px;border:5.3px solid #ee4a4f;border-radius:4px"></div>
</body></html>
